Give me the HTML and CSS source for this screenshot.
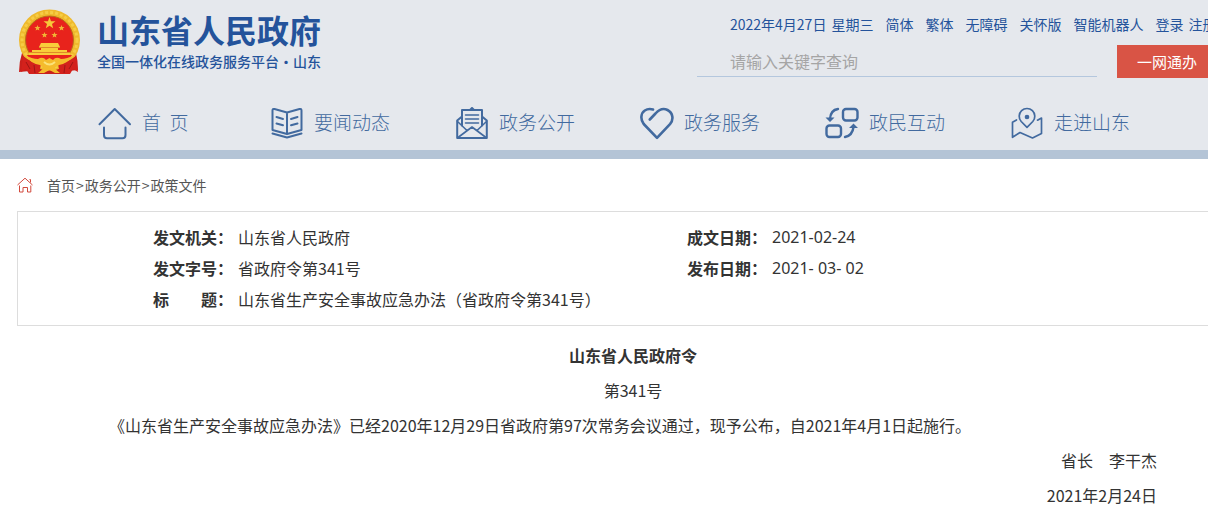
FILE: index.html
```html
<!DOCTYPE html>
<html lang="zh-CN">
<head>
  <meta charset="UTF-8">
  <title>山东省生产安全事故应急办法</title>
  <meta name="viewport" content="width=device-width, initial-scale=1.0">
  <link rel="stylesheet" href="styles.css">
</head>
<body>
  <header class="header">
    <div class="header-top">
      <a class="logo" href="#">
        <!-- 国徽 -->
        <svg class="emblem" viewBox="0 0 62 66" width="62" height="66" aria-hidden="true">
          <path d="M4 44 Q1 53 1 63 L12 62 L12 65 L50 65 L50 62 L60 61 Q60 52 58 44 Z" fill="#c9201c"/>
          <circle cx="31.500" cy="31" r="30.500" fill="#efb92c"/>
          <circle cx="31.500" cy="31" r="27.500" fill="none" stroke="#f6cd45" stroke-width="3" stroke-dasharray="3 2"/>
          <circle cx="31.500" cy="31" r="24" fill="#e8231c" stroke="#b9701a"/>
          <path d="M31.500 8 L33 12.200 L37.500 12.300 L34 15 L35.200 19.200 L31.500 16.700 L27.800 19.200 L29 15 L25.500 12.300 L30 12.200 Z" fill="#f6c83a"/>
          <g fill="#f0b535">
            <path id="s" d="M19.500 16 L20.300 18 L22.500 18.100 L20.800 19.500 L21.400 21.600 L19.500 20.400 L17.600 21.600 L18.200 19.500 L16.500 18.100 L18.700 18 Z"/>
            <use href="#s" x="24"/>
            <use href="#s" x="7" y="7"/>
            <use href="#s" x="17" y="7"/>
          </g>
          <path d="M23 34 H40 L42 38 H40 V41 H49 V44 H52 V46 H11 V44 H14 V41 H23 V38 H21 Z" fill="#f9cd3a"/>
          <path d="M11 43.500 H52 M21 38.500 H42" stroke="#e08a28" fill="none"/>
          <path d="M9 46 H54 Q50 53 44 55 H19 Q12 53 9 46 Z" fill="#e8231c"/>
          <path d="M5 47 Q14 54 23 55 L21 65 H11 L8 60 L3 63 Z M58 47 Q49 54 40 55 L42 65 H52 L55 60 L60 63 Z" fill="#d3211c"/>
          <path d="M7 46 Q14 50 20 50 Q25 47 28 51 L31.500 49 L35 51 Q38 47 43 50 Q49 50 56 46 Q49 55 41 56 L36 59 L42 64 H37 L31.500 61 L26 64 H20 L26 59 L22 56 Q13 55 7 46 Z" fill="#f5bb2c"/>
          <path d="M26 53 Q31.500 58 37 53" fill="none" stroke="#fbe27a" stroke-width="2"/>
          <path d="M8 53 L12 60 M55 53 L51 60 M16 56 L17 64 M47 56 L46 64" stroke="#9e1614" fill="none"/>
        </svg>
        <span class="logo-text">
          <strong class="logo-name">山东省人民政府</strong>
          <span class="logo-sub">全国一体化在线政务服务平台<span class="logo-dot">·</span>山东</span>
        </span>
      </a>

      <div class="header-right">
        <div class="tools">
          <span class="group"><span>2022年4月27日</span> <span>星期三</span></span>
          <a href="#">简体</a>
          <a href="#">繁体</a>
          <a href="#">无障碍</a>
          <a href="#">关怀版</a>
          <a href="#">智能机器人</a>
          <span class="group"><a href="#">登录</a> <a href="#">注册</a></span>
        </div>
        <form class="search">
          <input class="search-input" type="text" placeholder="请输入关键字查询" aria-label="请输入关键字查询">
          <button class="search-btn" type="button">一网通办</button>
        </form>
      </div>
    </div>

    <!-- 主导航 -->
    <nav class="nav">
      <a class="nav-item nav-home" href="#">
        <svg class="nav-icon" viewBox="0 0 34 34">
          <path d="M1.500 17.300 L16.700 2 L32 17.300 M6 20.500 V28 Q6 31.300 9 31.300 H24.500 Q27.500 31.300 27.500 28 V20.500"/>
        </svg>
        首&nbsp; 页
      </a>
      <a class="nav-item" href="#">
        <svg class="nav-icon" viewBox="0 0 34 34">
          <path d="M17 5.500 L4.500 2 Q2.500 1.500 2.500 3.500 V23 L17 27 L31.500 23 V3.500 Q31.500 1.500 29.500 2 Z V27 M2.500 26.500 L17 30.500 L31.500 26.500"/>
          <path d="M6.500 10 L13 12 M6.500 16.500 L13 18.300 M27.500 10 L21 12 M27.500 16.500 L21 18.300"/>
        </svg>
        要闻动态
      </a>
      <a class="nav-item" href="#">
        <svg class="nav-icon" viewBox="0 0 34 34">
          <path d="M7 18.500 V3 H27 V18.500 M7 9.500 L2.200 13.500 V31 H31.800 V13.500 L27 9.500"/>
          <path d="M2.500 14.500 L12 23.500 M31.500 14.500 L22 23.500 M3 30.500 L17 20 L31 30.500 M10.500 8 H23.500 M10.500 12 H23.500 M10.500 16 H23.500" stroke-width="1.600"/>
          <path d="M15 3 L17 1 L19 3 Z"/>
        </svg>
        政务公开
      </a>
      <a class="nav-item" href="#">
        <svg class="nav-icon" viewBox="0 0 34 34" stroke-width="2.600">
          <path d="M9.800 12.500 L15.500 6.500 C20 1.500 24 1.200 27.500 3 C33 6 34 12.500 30 17.200 L17 30.800 L3.700 17 C0 12 1 6 4.800 3.500 Q8.500 1 13 2.500"/>
        </svg>
        政务服务
      </a>
      <a class="nav-item" href="#">
        <svg class="nav-icon" viewBox="0 0 34 34" stroke-width="2.400">
          <rect x="18" y="2" width="14.500" height="11.500" rx="3"/>
          <rect x="1.500" y="18.500" width="14.500" height="11.500" rx="3"/>
          <path d="M13 2 Q5.500 3 5 12 M20 30 Q27.500 28.500 28.500 20"/>
          <path class="fill" d="M0.500 10.500 H9.500 L5 15 Z M24 21 H33 L28.500 16.500 Z" stroke="none"/>
        </svg>
        政民互动
      </a>
      <a class="nav-item" href="#">
        <svg class="nav-icon" viewBox="0 0 34 34" stroke-width="1.700">
          <path d="M17 20.300 L11.200 14.500 A7.800 7.800 0 1 1 22.800 14.500 Z"/>
          <path d="M6.500 13 L2.500 15.300 V30.300 L10 25.500 L22.500 31 L31.500 26.500 V11 L27.500 13.200"/>
          <circle class="fill" cx="17" cy="10" r="1.500"/>
        </svg>
        走进山东
      </a>
    </nav>
  </header>

  <main class="main">
    <!-- 当前位置 -->
    <div class="crumbs">
      <svg class="crumbs-icon" viewBox="0 0 16 16" width="16" height="16" aria-hidden="true">
        <path d="M0.500 8 L8 1.200 L15.500 8 M12.500 2.500 H13.500 V5.500 M2.500 8.500 V15 H6 V10.500 H10.500 V15 H13.800 V8.500"/>
      </svg>
      <a href="#">首页</a><span class="sep">&gt;</span><a href="#">政务公开</a><span class="sep">&gt;</span><a href="#">政策文件</a>
    </div>

    <!-- 文件信息 -->
    <div class="info">
      <table class="info-table">
        <tr>
          <th scope="row">发文机关：</th>
          <td class="info-wide">山东省人民政府</td>
          <th scope="row">成文日期：</th>
          <td class="info-date">2021-02-24</td>
        </tr>
        <tr>
          <th scope="row">发文字号：</th>
          <td class="info-wide">省政府令第341号</td>
          <th scope="row">发布日期：</th>
          <td class="info-date">2021- 03- 02</td>
        </tr>
        <tr>
          <th scope="row">标　　题：</th>
          <td colspan="3">山东省生产安全事故应急办法（省政府令第341号）</td>
        </tr>
      </table>
    </div>

    <!-- 正文 -->
    <article class="article">
      <h1 class="article-title">山东省人民政府令</h1>
      <p class="article-no">第341号</p>
      <p class="article-text">《山东省生产安全事故应急办法》已经2020年12月29日省政府第97次常务会议通过，现予公布，自2021年4月1日起施行。</p>
      <p class="article-sign">省长　李干杰</p>
      <p class="article-sign">2021年2月24日</p>
    </article>
  </main>
</body>
</html>
```
FILE: styles.css
```css
* {
  box-sizing: border-box;
  margin: 0;
  padding: 0;
}

body {
  font-family: "Noto Sans CJK SC", "Liberation Sans", sans-serif;
  font-size: 16px;
  color: #333;
  background: #fff;
  overflow-x: hidden;
}

a {
  color: inherit;
  text-decoration: none;
}

/* 页头 */
.header {
  min-width: 1249px;
  background: #e5e8ed;
  border-bottom: 9px solid #b4c4d6;
}

.header-top {
  display: flex;
  height: 96px;
  padding: 9px 32px 0 18px;
  justify-content: space-between;
}

.logo {
  display: flex;
  align-items: flex-start;
  gap: 17px;
  color: #24539b;
}

.logo-text {
  display: flex;
  flex-direction: column;
}

.logo-name {
  font-size: 32px;
  line-height: 40px;
}

.logo-sub {
  font-size: 14px;
  font-weight: 500;
  line-height: 24px;
}

.logo-dot {
  display: inline-block;
  width: 14px;
  text-align: center;
}

.header-right {
  width: 520px;
}

.tools {
  display: flex;
  gap: 12px;
  padding: 3px 0 0 33px;
  font-size: 14px;
  line-height: 24px;
  color: #24539b;
  white-space: nowrap;
}

.group {
  display: flex;
  gap: 5px;
}

.search {
  display: flex;
  gap: 20px;
  padding-top: 9px;
}

.search-input {
  width: 400px;
  height: 32px;
  padding-left: 33px;
  border: none;
  border-bottom: 1px solid #b4c7de;
  background: none;
  font-family: inherit;
  font-size: 16px;
  color: #333;
}

.search-input::placeholder {
  color: #a5a5a5;
}

.search-btn {
  width: 100px;
  height: 33px;
  border: none;
  background: #d95445;
  color: #fff;
  font-family: inherit;
  font-size: 15px;
  cursor: pointer;
}

/* 主导航 */
.nav {
  display: flex;
  height: 54px;
  padding: 11px 0 0 98px;
}

.nav-item {
  display: flex;
  width: 185px;
  align-items: flex-start;
  gap: 10px;
  font-size: 19px;
  font-weight: 300;
  line-height: 30px;
  color: #426a9f;
}

.nav-home {
  width: 172px;
}

.nav-icon {
  width: 34px;
  height: 34px;
  fill: none;
  stroke: #426a9f;
  stroke-linecap: round;
  stroke-linejoin: round;
}

.nav-icon:not([stroke-width]) {
  stroke-width: 2;
}

.nav-icon .fill {
  fill: #426a9f;
}

/* 当前位置 */
.main {
  min-width: 1232px;
  margin: 0 17px;
}

.crumbs {
  display: flex;
  height: 52px;
  align-items: center;
  font-size: 14px;
  line-height: 20px;
  color: #555;
}

.crumbs-icon {
  margin-right: 14px;
  fill: none;
  stroke: #d2493c;
}

.sep {
  padding: 0 1px;
}

/* 文件信息 */
.info {
  min-width: 1232px;
  padding: 10px 135px;
  border: 1px solid #ddd;
}

.info-table {
  border-collapse: collapse;
  line-height: 31px;
}

.info-table th {
  width: 85px;
  text-align: left;
  font-weight: bold;
  white-space: nowrap;
}

.info-wide {
  width: 449px;
}

.info-date {
  font-family: "Noto Sans", "Noto Sans CJK SC", sans-serif;
}

/* 正文 */
.article {
  min-width: 1232px;
  padding: 12px 60px;
  line-height: 35px;
}

.article-title,
.article-no {
  text-align: center;
}

.article-title {
  font-size: 16px;
}

.article-text {
  text-indent: 2em;
}

.article-sign {
  padding-right: 2em;
  text-align: right;
}
```
